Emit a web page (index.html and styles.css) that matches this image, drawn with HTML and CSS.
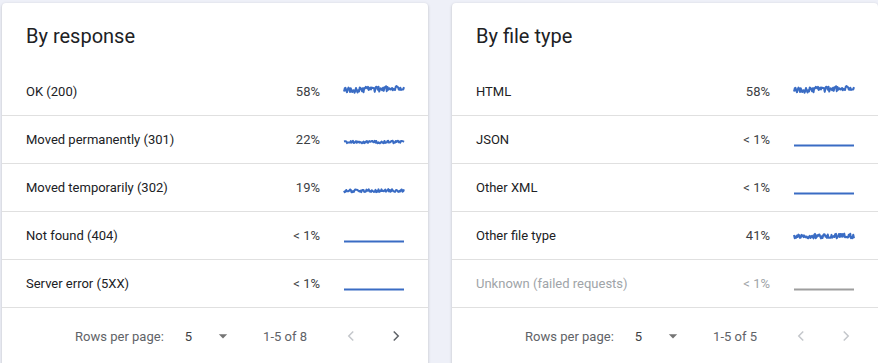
FILE: index.html
```html
<!DOCTYPE html>
<html lang="en">
<head>
  <meta charset="UTF-8">
  <meta name="viewport" content="width=device-width, initial-scale=1.0">
  <title>Crawl stats breakdown</title>
  <link rel="stylesheet" href="styles.css">
</head>
<body>
  <div class="page">
    <section class="card">
      <div class="card-header">
        <h2 class="card-title">By response</h2>
      </div>
      <div class="row">
        <span class="label">OK (200)</span>
        <span class="value">58%</span>
        <svg class="spark" viewBox="0 0 60 20" data-base="8.5" data-amp="2.8" data-trend="-2.5" data-seed="11"></svg>
      </div>
      <div class="row">
        <span class="label">Moved permanently (301)</span>
        <span class="value">22%</span>
        <svg class="spark" viewBox="0 0 60 20" data-base="12" data-amp="1.3" data-trend="0" data-seed="5"></svg>
      </div>
      <div class="row">
        <span class="label">Moved temporarily (302)</span>
        <span class="value">19%</span>
        <svg class="spark" viewBox="0 0 60 20" data-base="13" data-amp="1.5" data-trend="-0.5" data-seed="23"></svg>
      </div>
      <div class="row">
        <span class="label">Not found (404)</span>
        <span class="value">&lt; 1%</span>
        <svg class="spark" viewBox="0 0 60 20" data-base="15.5" data-amp="0" data-trend="0" data-seed="1"></svg>
      </div>
      <div class="row">
        <span class="label">Server error (5XX)</span>
        <span class="value">&lt; 1%</span>
        <svg class="spark" viewBox="0 0 60 20" data-base="15.5" data-amp="0" data-trend="0" data-seed="1"></svg>
      </div>
      <div class="footer">
        <span class="rows-label">Rows per page:</span>
        <span class="rows-select">5</span>
        <svg class="drop" viewBox="0 0 24 24"><path d="M7 10l5 5 5-5z"/></svg>
        <span class="range">1-5 of 8</span>
        <button class="page-btn disabled">
          <svg viewBox="0 0 24 24"><polyline points="15,6 9,12 15,18"/></svg>
        </button>
        <button class="page-btn">
          <svg viewBox="0 0 24 24"><polyline points="9,6 15,12 9,18"/></svg>
        </button>
      </div>
    </section>

    <section class="card">
      <div class="card-header">
        <h2 class="card-title">By file type</h2>
      </div>
      <div class="row">
        <span class="label">HTML</span>
        <span class="value">58%</span>
        <svg class="spark" viewBox="0 0 60 20" data-base="8.5" data-amp="2.8" data-trend="-2.5" data-seed="11"></svg>
      </div>
      <div class="row">
        <span class="label">JSON</span>
        <span class="value">&lt; 1%</span>
        <svg class="spark" viewBox="0 0 60 20" data-base="15.5" data-amp="0" data-trend="0" data-seed="1"></svg>
      </div>
      <div class="row">
        <span class="label">Other XML</span>
        <span class="value">&lt; 1%</span>
        <svg class="spark" viewBox="0 0 60 20" data-base="15.5" data-amp="0" data-trend="0" data-seed="1"></svg>
      </div>
      <div class="row">
        <span class="label">Other file type</span>
        <span class="value">41%</span>
        <svg class="spark" viewBox="0 0 60 20" data-base="10" data-amp="2.4" data-trend="0" data-seed="37"></svg>
      </div>
      <div class="row muted">
        <span class="label">Unknown (failed requests)</span>
        <span class="value">&lt; 1%</span>
        <svg class="spark" viewBox="0 0 60 20" data-base="15.5" data-amp="0" data-trend="0" data-seed="1"></svg>
      </div>
      <div class="footer">
        <span class="rows-label">Rows per page:</span>
        <span class="rows-select">5</span>
        <svg class="drop" viewBox="0 0 24 24"><path d="M7 10l5 5 5-5z"/></svg>
        <span class="range">1-5 of 5</span>
        <button class="page-btn disabled">
          <svg viewBox="0 0 24 24"><polyline points="15,6 9,12 15,18"/></svg>
        </button>
        <button class="page-btn disabled">
          <svg viewBox="0 0 24 24"><polyline points="9,6 15,12 9,18"/></svg>
        </button>
      </div>
    </section>
  </div>

  <script>
    // Draw the little trend lines from a seeded noise
    function seeded(seed) {
      return function () {
        seed = (seed * 16807) % 2147483647;
        return seed / 2147483647;
      };
    }

    document.querySelectorAll('.spark').forEach(svg => {
      const base = parseFloat(svg.dataset.base);
      const amp = parseFloat(svg.dataset.amp);
      const trend = parseFloat(svg.dataset.trend);
      const rand = seeded(parseInt(svg.dataset.seed, 10) * 7919);
      const points = [];
      for (let x = 0; x <= 60; x += 0.75) {
        let y = base + trend * (x / 60);
        if (amp > 0) y += (rand() - 0.5) * 2 * amp;
        points.push(x + ',' + y.toFixed(2));
      }
      const line = document.createElementNS('http://www.w3.org/2000/svg', 'polyline');
      line.setAttribute('points', points.join(' '));
      svg.appendChild(line);
    });
  </script>
</body>
</html>
```

FILE: styles.css
```css
body {
  margin: 0;
  padding: 0;
  font-family: Roboto, "Noto Sans", Arial, sans-serif;
  background-color: #eef0f8;
  color: #202124;
  overflow: hidden;
}

.page {
  display: flex;
  gap: 24px;
  padding: 3px 0 0 2px;
}

.card {
  width: 426px;
  flex-shrink: 0;
  background: white;
  border-radius: 4px 4px 0 0;
  box-shadow: 0 1px 2px rgba(60, 64, 67, 0.2), 0 1px 3px 1px rgba(60, 64, 67, 0.08);
}

.card-header {
  display: flex;
  align-items: center;
  height: 65px;
  padding: 0 24px;
}

.card-title {
  margin: 0;
  font-size: 20px;
  font-weight: 400;
  line-height: 28px;
  color: #202124;
}

.row {
  display: flex;
  align-items: center;
  height: 48px;
  box-sizing: border-box;
  padding: 0 24px;
  border-bottom: 1px solid #e0e0e0;
  font-size: 13px;
}

.row .label {
  flex: 1;
  color: #202124;
}

.row .value {
  color: #3c4043;
  text-align: right;
}

.spark {
  width: 60px;
  height: 20px;
  margin-left: 24px;
  overflow: visible;
}

.spark polyline {
  fill: none;
  stroke: #3a6cc4;
  stroke-width: 2;
  stroke-linejoin: round;
}

.row.muted .label,
.row.muted .value {
  color: #a0a4a8;
}

.row.muted .spark polyline {
  stroke: #9e9e9e;
}

.footer {
  display: flex;
  align-items: center;
  justify-content: flex-end;
  height: 56px;
  padding-right: 20px;
  font-size: 13px;
  color: #5f6368;
}

.rows-select {
  margin-left: 21px;
  color: #3c4043;
}

.drop {
  width: 20px;
  height: 20px;
  margin-left: 21px;
  fill: #757575;
}

.range {
  margin-left: 30px;
}

.page-btn {
  display: flex;
  align-items: center;
  justify-content: center;
  width: 24px;
  height: 24px;
  padding: 0;
  margin-left: 21px;
  border: none;
  background: none;
  cursor: pointer;
}

.range + .page-btn {
  margin-left: 32px;
}

.page-btn svg {
  width: 18px;
  height: 18px;
  fill: none;
  stroke: #5f6368;
  stroke-width: 2;
}

.page-btn.disabled svg {
  stroke: #c4c7cb;
}
```
